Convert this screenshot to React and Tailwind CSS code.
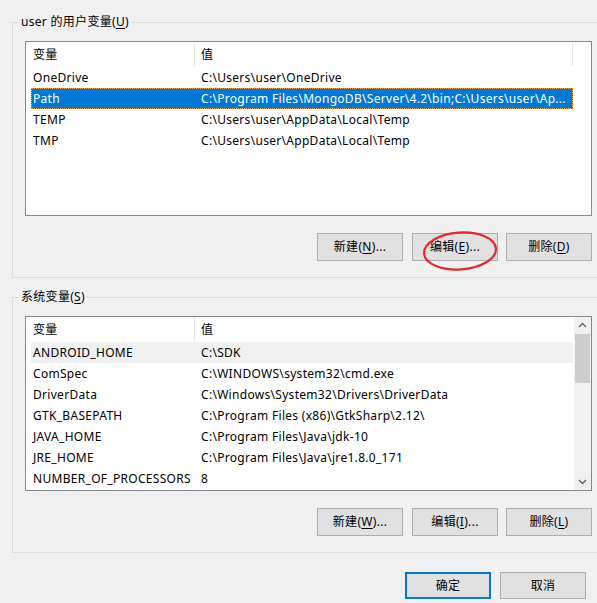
const userVars = [
  ["OneDrive", "C:\\Users\\user\\OneDrive"],
  ["Path", "C:\\Program Files\\MongoDB\\Server\\4.2\\bin;C:\\Users\\user\\Ap..."],
  ["TEMP", "C:\\Users\\user\\AppData\\Local\\Temp"],
  ["TMP", "C:\\Users\\user\\AppData\\Local\\Temp"],
];

const sysVars = [
  ["ANDROID_HOME", "C:\\SDK"],
  ["ComSpec", "C:\\WINDOWS\\system32\\cmd.exe"],
  ["DriverData", "C:\\Windows\\System32\\Drivers\\DriverData"],
  ["GTK_BASEPATH", "C:\\Program Files (x86)\\GtkSharp\\2.12\\"],
  ["JAVA_HOME", "C:\\Program Files\\Java\\jdk-10"],
  ["JRE_HOME", "C:\\Program Files\\Java\\jre1.8.0_171"],
  ["NUMBER_OF_PROCESSORS", "8"],
];

const Mnemonic = ({ pre, k, post }) => (
  <span className="whitespace-nowrap">
    {pre}
    <span className="underline underline-offset-2">{k}</span>
    {post}
  </span>
);

const Btn = ({ pre, k, post, className = "", children }) => (
  <div
    className={`relative w-[86px] h-[28px] border border-[#adadad] bg-[#e1e1e1] flex items-center justify-center ${className}`}
  >
    <Mnemonic pre={pre} k={k} post={post} />
    {children}
  </div>
);

const Header = ({ last }) => (
  <div className="h-[25px] flex items-center">
    <div className="w-[168px] pl-[7px]">变量</div>
    <div className="w-px h-[23px] bg-[#e5e5e5]" />
    <div className="w-[377px] pl-[6px]">值</div>
    {last && <div className="w-px h-[23px] bg-[#e5e5e5]" />}
  </div>
);

const Row = ({ name, value, state }) => {
  let cls = "";
  if (state === "active")
    cls = "bg-[#0078d7] text-white outline outline-1 outline-dotted outline-[#f5a04a] -outline-offset-1";
  if (state === "soft") cls = "bg-[#f0f0f0]";
  return (
    <div className={`ml-[5px] w-[542px] h-[21px] flex items-center whitespace-nowrap ${cls}`}>
      <div className="w-[170px] pl-[2px]">{name}</div>
      <div className="flex-1 overflow-hidden">{value}</div>
    </div>
  );
};

const Chevron = ({ down }) => (
  <div className="h-[17px] flex items-center justify-center">
    <svg width="17" height="17" viewBox="0 0 17 17">
      <polyline
        points={down ? "5,7 8.5,10.5 12,7" : "5,10 8.5,6.5 12,10"}
        fill="none"
        stroke="#606060"
        strokeWidth="1.3"
      />
    </svg>
  </div>
);

const GroupBox = ({ pre, k, className = "", children }) => (
  <div className={`relative w-[600px] border border-[#dcdcdc] pl-[12px] pt-[18px] pb-[16px] ${className}`}>
    <div className="absolute left-[6px] -top-[9px] px-[2px] leading-[16px] bg-[#f0f0f0]">
      <Mnemonic pre={pre} k={k} post=")" />
    </div>
    {children}
  </div>
);

export default function App() {
  return (
    <div className="w-[597px] h-[603px] overflow-hidden bg-[#f0f0f0] pl-[12px] pt-[22px] text-[12px] leading-[16px] tracking-[0.3px] text-black font-['Segoe_UI','Noto_Sans','Noto_Sans_CJK_SC',sans-serif]">
      <GroupBox pre="user 的用户变量(" k="U">
        <div className="w-[567px] h-[175px] border border-[#828790] bg-white">
          <Header last />
          {userVars.map(([n, v]) => (
            <Row key={n} name={n} value={v} state={n === "Path" ? "active" : ""} />
          ))}
        </div>
        <div className="w-[567px] mt-[17px] flex justify-end">
          <Btn pre="新建(" k="N" post=")..." className="mr-[9px]" />
          <Btn pre="编辑(" k="E" post=")..." className="mr-[8px]">
            <svg
              className="absolute left-[8px] -top-[4px] overflow-visible"
              width="78"
              height="42"
              viewBox="0 0 78 42"
            >
              <ellipse
                cx="39"
                cy="21"
                rx="36"
                ry="18.5"
                fill="none"
                stroke="#e8262b"
                strokeWidth="2.2"
                transform="rotate(-4 39 21)"
              />
            </svg>
          </Btn>
          <Btn pre="删除(" k="D" post=")" />
        </div>
      </GroupBox>

      <GroupBox pre="系统变量(" k="S" className="mt-[19px]">
        <div className="w-[567px] h-[175px] border border-[#828790] bg-white flex">
          <div className="w-[548px]">
            <Header />
            {sysVars.map(([n, v]) => (
              <Row key={n} name={n} value={v} state={n === "ANDROID_HOME" ? "soft" : ""} />
            ))}
          </div>
          <div className="w-[17px] bg-[#f0f0f0] flex flex-col">
            <Chevron />
            <div className="h-[49px] mx-[1px] bg-[#cdcdcd]" />
            <div className="flex-1" />
            <Chevron down />
          </div>
        </div>
        <div className="w-[567px] mt-[17px] flex justify-end">
          <Btn pre="新建(" k="W" post=")..." className="mr-[9px]" />
          <Btn pre="编辑(" k="I" post=")..." className="mr-[8px]" />
          <Btn pre="删除(" k="L" post=")" />
        </div>
      </GroupBox>

      <div className="mt-[19px] pr-[11px] flex justify-end gap-[9px]">
        <div className="w-[86px] h-[27px] border-2 border-[#0078d7] bg-[#e1e1e1] flex items-center justify-center">
          确定
        </div>
        <div className="w-[86px] h-[27px] border border-[#adadad] bg-[#e1e1e1] flex items-center justify-center">
          取消
        </div>
      </div>
    </div>
  );
}
